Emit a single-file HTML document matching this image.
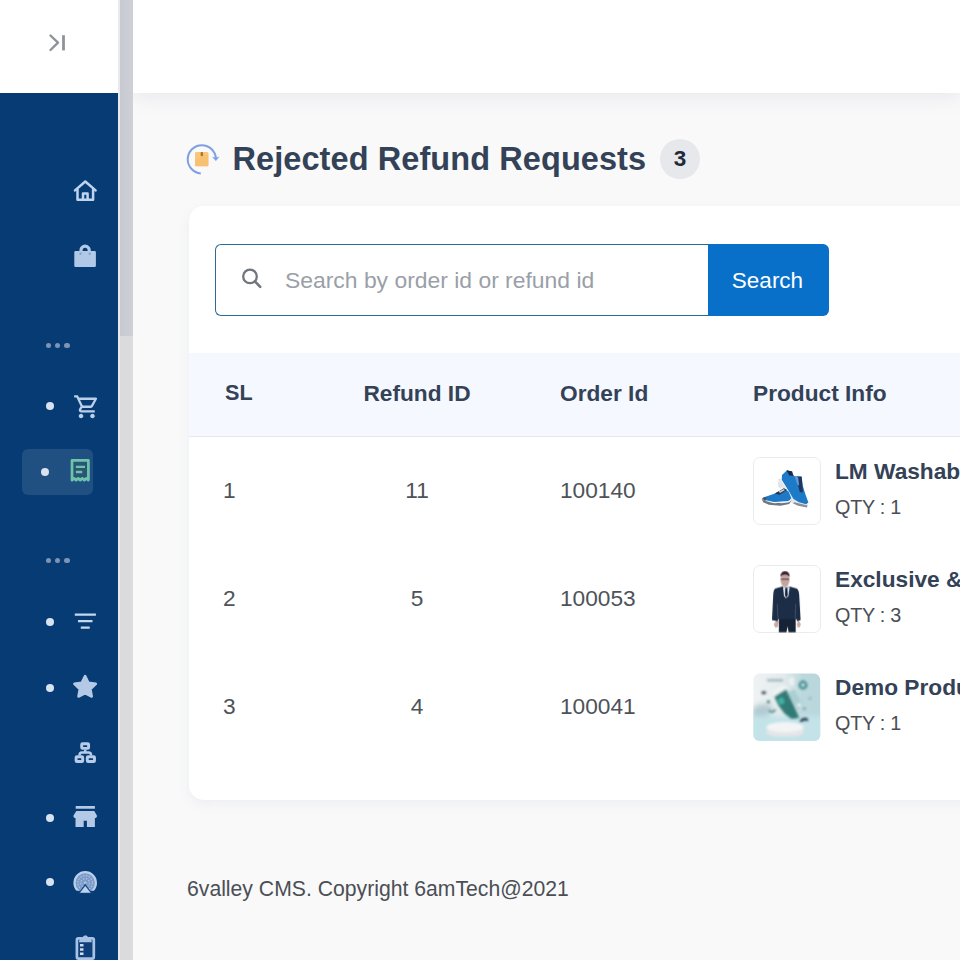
<!DOCTYPE html>
<html lang="en">
<head>
<meta charset="utf-8">
<title>Rejected Refund Requests</title>
<style>
*{box-sizing:border-box;margin:0;padding:0}
html,body{width:960px;height:960px;overflow:hidden}
body{font-family:"Liberation Sans",sans-serif;background:#f9f9fa;color:#334257;position:relative}
.abs{position:absolute}
#side-top{left:0;top:0;width:118px;height:93px;background:#fff}
#side{left:0;top:93px;width:118px;height:867px;background:#073b74}
#sb-track{left:118px;top:0;width:14.8px;height:960px;background:#dbdbdd;border-left:2px solid #e8eaed}
#sb-thumb{left:120px;top:0;width:12.8px;height:335.5px;background:linear-gradient(90deg,#c7cad1,#cdd0d6)}
#header{left:133px;top:0;width:827px;height:93px;background:#fff;box-shadow:0 5px 18px rgba(120,130,140,.13)}
.dot{width:8px;height:8px;border-radius:50%;background:#d8e2f1;left:45.7px}
.ell{left:46px;color:#7f97b8;font-size:0}
.ell i{display:inline-block;width:5.2px;height:5.2px;border-radius:50%;background:#7d94b5;margin-right:4px}
#active{left:21.5px;top:449px;width:71.7px;height:45.5px;border-radius:6px;background:rgba(255,255,255,.1)}
svg{position:absolute;overflow:visible}
#title{left:232.5px;top:138.7px;font-size:32.5px;letter-spacing:.08px;font-weight:700;color:#334257;line-height:40px;white-space:nowrap}
#badge{left:660px;top:139px;width:40px;height:40px;border-radius:50%;background:#e7e8ec;color:#1e2a3a;font-weight:700;font-size:22.5px;line-height:40px;text-align:center}
#card{left:188.5px;top:206px;width:800px;height:594px;background:#fff;border-radius:15px;box-shadow:0 4px 12px rgba(140,152,164,.1)}
#inp{left:215px;top:244px;width:494px;height:72px;border:1.8px solid #2a6a93;border-right:none;border-radius:6px 0 0 6px;background:#fff}
#ph{left:285px;top:266.7px;font-size:22.9px;color:#9a9fa8;line-height:26px;white-space:nowrap}
#btn{left:708px;top:244px;width:121px;height:72px;background:#0870c9;border-radius:0 6px 6px 0;color:#fff;font-size:22.5px;line-height:73.5px;text-align:center;padding-right:2px}
#thead{left:188.5px;top:353.4px;width:772px;height:83.3px;background:#f5f8fe;border-bottom:1.2px solid #e4e7ee}
.th{font-weight:700;font-size:22.7px;color:#334257;line-height:26px;white-space:nowrap}
.td{font-size:22.7px;color:#4e5359;line-height:26px;white-space:nowrap}
.c{text-align:center;width:120px}
.thumb{left:752.5px;width:68px;height:68px;border:1.5px solid #ebecee;border-radius:7px;background:#fff;overflow:hidden}
.pn{left:835px;font-weight:700;font-size:22.7px;color:#334257;line-height:26px;white-space:nowrap}
.qty{left:835px;font-size:19.8px;letter-spacing:-.25px;color:#4a4e55;line-height:24px;white-space:nowrap}
#foot{left:187px;top:875.7px;font-size:21.2px;color:#4b4f55;line-height:26px;white-space:nowrap}
</style>
</head>
<body>
<div class="abs" id="header"></div>
<div class="abs" id="side-top"></div>
<div class="abs" id="side"></div>
<div class="abs" id="sb-track"></div>
<div class="abs" id="sb-thumb"></div>


<!-- sidebar toggle -->
<svg style="left:44px;top:30px" width="28" height="26" viewBox="44 30 28 26"><path d="M50.5 35.5L58 42.7L50.5 50" fill="none" stroke="#8e9399" stroke-width="2.4" stroke-linecap="round" stroke-linejoin="round"/><path d="M63.5 35.2V50.4" fill="none" stroke="#8e9399" stroke-width="2.8" stroke-linecap="butt"/></svg>

<!-- home -->
<svg style="left:71px;top:176px" width="28" height="28" viewBox="71 176 28 28"><g fill="none" stroke="#c0d3ed" stroke-width="2.5" stroke-linejoin="round" stroke-linecap="round"><path d="M75 190.400L85.3 181.500L95.6 190.4"/><path d="M77.5 189.500V199.800H93.100V189.5"/><path d="M83 199.800V193.600H87.600V199.8"/></g></svg>

<!-- bag -->
<svg style="left:70px;top:242px" width="30" height="28" viewBox="70 242 30 28"><path d="M81 252v-1.800a4.1 4.1 0 0 1 8.2 0v1.8" fill="none" stroke="#b1c8e6" stroke-width="3.2"/><rect x="74.3" y="250.9" width="21.6" height="16" rx="1.2" fill="#b1c8e6"/><circle cx="80.5" cy="253.8" r="1.2" fill="#86a4cd"/><circle cx="89.7" cy="253.8" r="1.2" fill="#86a4cd"/></svg>

<!-- ellipsis 1 -->
<div class="abs ell" style="top:343px"><i></i><i></i><i></i></div>

<!-- cart -->
<div class="abs dot" style="top:402.3px"></div>
<svg style="left:72.9px;top:392.6px" width="27.5" height="27.5" viewBox="0 0 24 24"><path fill="#bcd0ea" d="M15.55 13c.75 0 1.41-.41 1.75-1.03l3.58-6.49c.37-.66-.11-1.48-.87-1.48H5.21l-.94-2H1v2h2l3.6 7.590-1.350 2.440C4.520 15.370 5.480 17 7 17h12v-2H7l1.1-2h7.450zM6.160 6h12.150l-2.760 5H8.530L6.160 6zM7 18c-1.1 0-1.990.9-1.990 2S5.9 22 7 22s2-.9 2-2-.9-2-2-2zm10 0c-1.1 0-1.990.9-1.990 2s.89 2 1.990 2 2-.9 2-2-.9-2-2-2z"/></svg>

<!-- active: receipt -->
<div class="abs" id="active"></div>
<div class="abs dot" style="top:468px;left:40.8px"></div>
<svg style="left:68px;top:456px" width="24" height="28" viewBox="68 456 24 28"><path d="M72 460.300h16.400v19.800l-2.050-1.7-2.050 1.7-2.050-1.7-2.050 1.7-2.050-1.7-2.050 1.7-2.050-1.7-2.050 1.700z" fill="#2a5674" stroke="#6ec4ab" stroke-width="2.7" stroke-linejoin="round"/><path d="M75.9 466.900h9.100M75.9 472h6.3" stroke="#6ec4ab" stroke-width="2.3" fill="none"/></svg>

<!-- ellipsis 2 -->
<div class="abs ell" style="top:557.500px"><i></i><i></i><i></i></div>

<!-- filter -->
<div class="abs dot" style="top:618px"></div>
<svg style="left:72px;top:610px" width="26" height="22" viewBox="72 610 26 22"><path d="M74.8 614.600h21.100M78 621.100h14.500M80.8 627.600h8.9" stroke="#c6d8f0" stroke-width="2.4" fill="none"/></svg>

<!-- star -->
<div class="abs dot" style="top:683.8px"></div>
<svg style="left:70px;top:672px" width="30" height="30" viewBox="70 672 30 30"><path d="M85.1 676.1L88.4 682.9L95.8 683.9L90.4 689.1L91.7 696.5L85.1 693.0L78.5 696.5L79.8 689.1L74.4 683.9L81.8 682.9Z" fill="#b4c9e6" stroke="#b4c9e6" stroke-width="2.6" stroke-linejoin="round"/></svg>

<!-- sitemap -->
<svg style="left:72px;top:740px" width="26" height="25" viewBox="72 740 26 25"><g fill="none" stroke="#b7cce9" stroke-width="2.9"><rect x="81.7" y="743.7" width="6.9" height="4.7" rx=".8"/><rect x="76.1" y="756.8" width="6.6" height="4.7" rx=".8"/><rect x="87.3" y="756.8" width="7.2" height="4.7" rx=".8"/></g><path d="M79.6 755.6v-.8q0-2.3 2.3-2.300h6.800q2.3 0 2.3 2.300v.8M85.2 749.800v2.6" fill="none" stroke="#b7cce9" stroke-width="2.5"/></svg>

<!-- store -->
<div class="abs dot" style="top:813.6px"></div>
<svg style="left:72px;top:804px" width="27" height="25" viewBox="72 804 27 25"><path fill="#b3c9e6" d="M75.7 806h19.200v2.700h-19.200zM76.3 811h18l2.6 4.600q.6 1.9-1.2 2.300l-.8.100v8.900h-8v-6.200h-3.200v6.200h-8.200v-8.900l-.8-.1q-1.8-.4-1.2-2.300z"/></svg>

<!-- radar -->
<div class="abs dot" style="top:878.2px"></div>
<svg style="left:72px;top:869px" width="27" height="26" viewBox="72 869 27 26"><defs><clipPath id="rc"><rect x="72" y="869" width="27" height="21.8"/></clipPath></defs><g clip-path="url(#rc)"><circle cx="85.2" cy="882.9" r="10.7" fill="#7d9bc8" stroke="#b9cfea" stroke-width="2.2"/><circle cx="85.2" cy="882.9" r="7.3" fill="none" stroke="#a9c0e2" stroke-width="1.3" stroke-dasharray="1.6 1.3"/><circle cx="85.2" cy="882.9" r="4.3" fill="none" stroke="#a9c0e2" stroke-width="1.3" stroke-dasharray="1.6 1.3"/><circle cx="85.2" cy="882.9" r="1.6" fill="#a9c0e2"/></g><path d="M78.3 893.200L85.2 883.600L92.1 893.200Z" fill="#1d4a85"/><path d="M80 892.700L85.2 886L90.6 892.700Z" fill="#bcd4ee"/></svg>

<!-- clipboard -->
<svg style="left:72px;top:932px" width="27" height="28" viewBox="72 932 27 28"><rect x="76.9" y="938.3" width="16.9" height="20.3" rx="1.5" fill="#0d3f78" stroke="#a9c1e2" stroke-width="2.7"/><path d="M79 942.300q0-4.2 3.4-4.500q1-2.6 3-2.600t3 2.600q3.4.3 3.4 4.500z" fill="#a9c1e2"/><path d="M80 945.200h3.500M80 949.500h3.500M80 953.700h3.5" stroke="#cfdcf0" stroke-width="2.4" fill="none"/></svg>

<!-- title icon -->
<svg style="left:184px;top:141px" width="36" height="36" viewBox="184 141 36 36"><path d="M200.8 173.400A14.1 14.1 0 1 1 215.9 158.6" fill="none" stroke="#7f9fe4" stroke-width="2"/><path d="M212 156.700l3.9 4.300l3.6-4.600l-3.7 1.400z" fill="#7f9fe4"/><rect x="195" y="152" width="13.4" height="14.3" rx="1.3" fill="#f9c67a"/><path d="M195 160l13.4-6v12.300h-13.400z" fill="#f7bc6a" opacity=".6"/><rect x="200.6" y="152" width="2.5" height="4.3" rx="1" fill="#a9782c"/></svg>


<div class="abs" id="title">Rejected Refund Requests</div>
<div class="abs" id="badge">3</div>
<div class="abs" id="card"></div>
<div class="abs" id="inp"></div>
<!-- search icon -->
<svg style="left:240px;top:266px" width="24" height="24" viewBox="240 266 24 24"><circle cx="250" cy="276.4" r="6.8" fill="none" stroke="#71757c" stroke-width="2.3"/><path d="M254.9 281.400l5.3 5.4" stroke="#71757c" stroke-width="2.6" stroke-linecap="round"/></svg>
<div class="abs" id="ph">Search by order id or refund id</div>
<div class="abs" id="btn">Search</div>
<div class="abs" id="thead"></div>
<div class="abs th" style="left:225px;top:380px;font-size:21.6px">SL</div>
<div class="abs th c" style="left:357px;top:380px">Refund ID</div>
<div class="abs th" style="left:560px;top:380px">Order Id</div>
<div class="abs th" style="left:753px;top:380px">Product Info</div>

<div class="abs td" style="left:223px;top:477px">1</div>
<div class="abs td c" style="left:357px;top:477px">11</div>
<div class="abs td" style="left:560px;top:477px">100140</div>
<div class="abs thumb" style="top:457px"></div>
<div class="abs pn" style="top:458.3px">LM Washable Sneakers</div>
<div class="abs qty" style="top:495px">QTY : 1</div>

<div class="abs td" style="left:223px;top:585px">2</div>
<div class="abs td c" style="left:357px;top:585px">5</div>
<div class="abs td" style="left:560px;top:585px">100053</div>
<div class="abs thumb" style="top:565px"></div>
<div class="abs pn" style="top:566.3px">Exclusive &amp; Formal Suit</div>
<div class="abs qty" style="top:603px">QTY : 3</div>

<div class="abs td" style="left:223px;top:693px">3</div>
<div class="abs td c" style="left:357px;top:693px">4</div>
<div class="abs td" style="left:560px;top:693px">100041</div>
<div class="abs thumb" style="top:673px;border:none;background:transparent"></div>
<div class="abs pn" style="top:674.3px">Demo Product Item</div>
<div class="abs qty" style="top:711px">QTY : 1</div>


<!-- product thumbs -->
<svg style="left:745px;top:450px" width="85" height="85" viewBox="0 0 960 960">
<defs><filter id="b1" x="-20%" y="-20%" width="140%" height="140%"><feGaussianBlur stdDeviation="6"/></filter></defs>
<g filter="url(#b1)">
<path d="M372 330L400 318L470 440L560 560L712 610L702 648L600 628L500 585L440 470Z" fill="#e4e8ee"/>
<path d="M368 345L420 395L408 445L378 415Z" fill="#dfe3e8"/>
<path d="M560 590L705 628L700 650L600 630L540 600Z" fill="#8b8e96"/>
<path d="M480 222L560 296L640 298L652 400L682 500L716 592L690 612L610 590L548 552L490 458L415 335L418 282Z" fill="#1b7ac9"/>
<path d="M470 232L532 240L548 292L500 288Z" fill="#1a2a40"/>
<path d="M585 300L640 302L655 480L618 475L600 400Z" fill="#22365a"/>
<path d="M560 300L600 305L612 400L590 390Z" fill="#5a9bd8"/>
<path d="M186 548L205 590L270 618L400 630L500 610L528 565L500 590L330 602L215 570Z" fill="#70757f"/>
<path d="M200 540L330 493L440 438L492 470L522 542L500 580L330 588L220 566Z" fill="#1b7ac9"/>
<path d="M240 585L420 602L505 585L525 555L480 578L330 590Z" fill="#eef0f3"/>
<path d="M338 492L440 432L475 452L390 505Z" fill="#2a3048"/>
<path d="M380 470L440 440L450 455L395 485Z" fill="#c9ccd6"/>
<path d="M192 545L245 528L228 578Z" fill="#4b4f5c"/>
</g>
</svg>

<svg style="left:745px;top:558px" width="85" height="85" viewBox="0 0 960 960">
<defs><filter id="b2" x="-20%" y="-20%" width="140%" height="140%"><feGaussianBlur stdDeviation="7"/></filter></defs>
<g filter="url(#b2)">
<ellipse cx="452" cy="248" rx="50" ry="80" fill="#c4a49c"/>
<path d="M400 215Q400 150 452 150Q505 150 505 215Q480 185 452 188Q420 185 400 215Z" fill="#3a2230"/>
<path d="M405 230h95v18h-95z" fill="#5a4448" opacity=".7"/>
<path d="M325 745l30 -40l25 5l-10 70l-30 5z" fill="#c9a8a0"/>
<path d="M585 745l20 -40l25 40l-10 35l-25 5z" fill="#c9a8a0"/>
<path d="M382 660H572V838H492L480 770L468 838H382Z" fill="#182235"/>
<path d="M420 322L340 345Q320 360 318 420L305 700L365 715L375 690L580 690L590 715L628 700L612 420Q608 360 585 345L505 322Z" fill="#1f2e46"/>
<path d="M428 325L505 325L490 430L462 455L440 430Z" fill="#d9e2ee"/>
<path d="M455 335L478 335L482 420L465 445L452 420Z" fill="#162238"/>
<path d="M365 520L372 680" stroke="#52627d" stroke-width="10" fill="none" opacity=".7"/>
<path d="M572 520L566 680" stroke="#52627d" stroke-width="10" fill="none" opacity=".7"/>
</g>
</svg>

<svg style="left:745px;top:666px" width="85" height="85" viewBox="0 0 960 960">
<defs>
<filter id="b3" x="-20%" y="-20%" width="140%" height="140%"><feGaussianBlur stdDeviation="11"/></filter>
<filter id="b3b" x="-20%" y="-20%" width="140%" height="140%"><feGaussianBlur stdDeviation="30"/></filter>
<clipPath id="c3"><rect x="94" y="86" width="755" height="761" rx="68"/></clipPath>
<linearGradient id="g3" x1="0" y1="0" x2="1" y2="0"><stop offset="0" stop-color="#f1f3f4"/><stop offset=".45" stop-color="#e3ebed"/><stop offset=".7" stop-color="#bcd8dd"/><stop offset="1" stop-color="#b7d6dc"/></linearGradient>
</defs>
<g clip-path="url(#c3)">
<rect x="60" y="60" width="840" height="840" fill="url(#g3)"/>
<g filter="url(#b3b)">
<path d="M60 520Q200 470 330 560L900 560V900H60Z" fill="#c3e3e9"/>
<path d="M90 470Q230 380 330 480L250 560L90 560Z" fill="#a9c3cb" opacity=".8"/>
</g>
<g filter="url(#b3)">
<path d="M245 690V745Q245 800 452 800Q660 800 660 745V690Z" fill="#e3e5e7"/>
<ellipse cx="452" cy="690" rx="208" ry="58" fill="#f3f4f5"/>
<path d="M500 130h55v90h-55z" fill="#eef0f2"/>
<path d="M290 300L420 215L500 240L400 330L330 345Z" fill="#eef3f4"/>
<path d="M330 345L465 262L540 420L612 585L525 598L445 535L385 455Z" fill="#1c6f69" opacity=".9"/>
<path d="M370 380L420 350L450 410L400 440Z" fill="#3fb5a5"/>
<path d="M480 300L560 260L640 420L600 500Z" fill="#9fc9cc" opacity=".75"/>
<path d="M615 640Q625 580 690 585Q720 595 710 625Q680 600 650 625Z" fill="#1c2a3a"/>
<circle cx="655" cy="215" r="38" fill="none" stroke="#2f7f80" stroke-width="22"/>
<path d="M250 150h180v22h-180z" fill="#6d8f97" opacity=".7"/>
<ellipse cx="212" cy="300" rx="28" ry="18" fill="#39474e"/>
<circle cx="265" cy="405" r="16" fill="#2e6f6c"/>
<path d="M270 500Q300 540 345 495" stroke="#2e6f6c" stroke-width="16" fill="none"/>
<circle cx="735" cy="365" r="12" fill="#6d9aa0"/>
<circle cx="670" cy="480" r="14" fill="#5e9aa0"/>
<circle cx="610" cy="440" r="20" fill="#e8f2f4"/>
</g>
</g>
</svg>

<div class="abs" id="foot">6valley CMS. Copyright 6amTech@2021</div>
</body>
</html>
